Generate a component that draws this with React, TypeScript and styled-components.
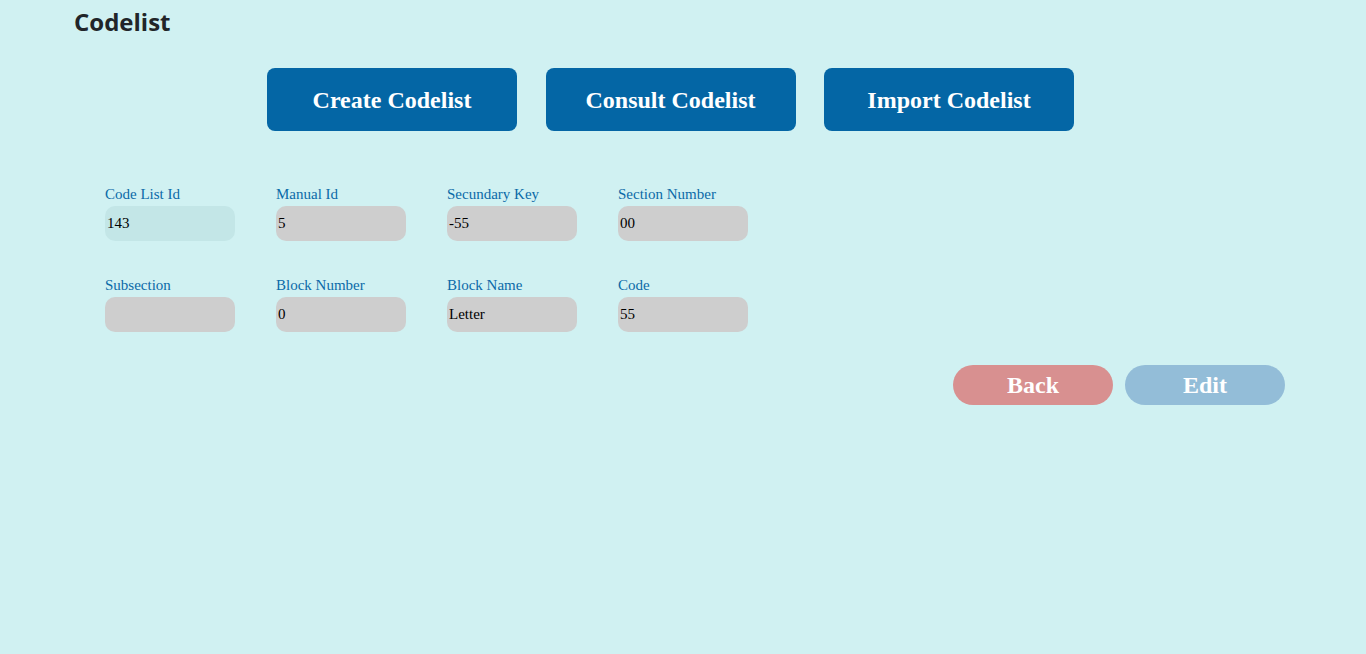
import styled, { createGlobalStyle } from 'styled-components';

const GlobalStyle = createGlobalStyle`
  html, body {
    margin: 0;
    padding: 0;
    background: #d0f1f2;
    font-family: "Liberation Serif", "Times New Roman", serif;
  }
`;

const fields = [
  { label: 'Code List Id', value: '143', readOnly: true },
  { label: 'Manual Id', value: '5' },
  { label: 'Secundary Key', value: '-55' },
  { label: 'Section Number', value: '00' },
  { label: 'Subsection', value: '' },
  { label: 'Block Number', value: '0' },
  { label: 'Block Name', value: 'Letter' },
  { label: 'Code', value: '55' },
];

export default function App() {
  return (
    <Page>
      <GlobalStyle />
      <Title>Codelist</Title>
      <MenuBar>
        <MenuButton>Create Codelist</MenuButton>
        <MenuButton>Consult Codelist</MenuButton>
        <MenuButton>Import Codelist</MenuButton>
      </MenuBar>
      <FormGrid>
        {fields.map((f) => (
          <Field key={f.label}>
            <Label>{f.label}</Label>
            <Input $readOnly={f.readOnly} value={f.value} readOnly />
          </Field>
        ))}
      </FormGrid>
      <Actions>
        <PillButton $tone="back">Back</PillButton>
        <PillButton $tone="edit">Edit</PillButton>
      </Actions>
    </Page>
  );
}

const Page = styled.div`
  width: 100vw;
  min-height: 654px;
  background: #d0f1f2;
  box-sizing: border-box;
  padding-top: 6px;
`;

const Title = styled.h2`
  margin: 0 0 0 74px;
  font-family: "Open Sans", "Noto Sans", sans-serif;
  font-weight: 700;
  font-size: 24px;
  line-height: 32px;
  color: #212529;
`;

const MenuBar = styled.div`
  display: flex;
  gap: 28.5px;
  padding-left: 267px;
  margin-top: 30px;
`;

const MenuButton = styled.button`
  width: 250px;
  height: 63px;
  border: none;
  border-radius: 8px;
  background: #0466a5;
  color: #fff;
  font-family: "Liberation Serif", "Times New Roman", serif;
  font-weight: 700;
  font-size: 24px;
  padding-top: 2px;
  cursor: pointer;
`;

const FormGrid = styled.div`
  display: grid;
  grid-template-columns: repeat(4, 130px);
  column-gap: 41px;
  row-gap: 36px;
  padding-left: 105px;
  margin-top: 55px;
`;

const Field = styled.div`
  display: flex;
  flex-direction: column;
`;

const Label = styled.label`
  font-size: 15px;
  line-height: 17px;
  color: #0b6aa8;
  margin-bottom: 3px;
`;

const Input = styled.input<{ $readOnly?: boolean }>`
  box-sizing: border-box;
  width: 130px;
  height: 35px;
  border: none;
  outline: none;
  border-radius: 10px;
  padding: 0 2px;
  background: ${(p) => (p.$readOnly ? '#c3e6e7' : '#cecece')};
  font-family: "Liberation Serif", "Times New Roman", serif;
  font-size: 15px;
  color: #000;
`;

const Actions = styled.div`
  display: flex;
  justify-content: flex-end;
  gap: 12px;
  padding-right: 81px;
  margin-top: 33px;
`;

const PillButton = styled.button<{ $tone: 'back' | 'edit' }>`
  width: 160px;
  height: 40px;
  border: none;
  border-radius: 20px;
  background: ${(p) => (p.$tone === 'back' ? '#d89090' : '#93bdd8')};
  color: #fff;
  font-family: "Liberation Serif", "Times New Roman", serif;
  font-weight: 700;
  font-size: 24px;
  cursor: pointer;
`;
